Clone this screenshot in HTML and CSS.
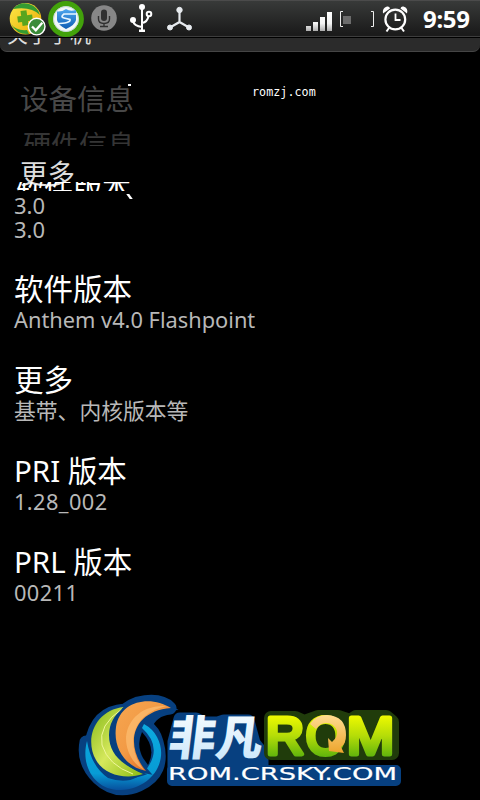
FILE: index.html
```html
<!DOCTYPE html>
<html lang="zh-CN">
<head>
  <meta charset="UTF-8">
  <title>关于手机</title>
  <link rel="stylesheet" href="styles.css">
</head>
<body>
<div class="phone">
  <header class="status-bar">
    <svg class="status-icons" width="200" height="38" viewBox="0 0 200 38">
      <defs>
        <linearGradient id="ball" x1="0" y1="0" x2="1" y2="1">
          <stop offset="0" stop-color="#ffe94a"/><stop offset="1" stop-color="#e6a800"/>
        </linearGradient>
        <linearGradient id="shield" x1="0" y1="0" x2="0" y2="1">
          <stop offset="0" stop-color="#4da6ee"/><stop offset="1" stop-color="#0e5db4"/>
        </linearGradient>
      </defs>
      <!-- safe guard -->
      <circle cx="25.500" cy="18.800" r="15.800" fill="url(#ball)"/>
      <path d="M13 9Q20 1 29 4Q38 7 40 15Q31 6 13 9Z" fill="#349b32"/>
      <path d="M11 24Q16 31 27 30L29 34Q17 35 11 24Z" fill="#349b32"/>
      <path d="M21.500 10.500h6v5h5v6h-5v4h-6v-4h-4v-6h4z" fill="#58a51e" transform="rotate(-8 25 18)"/>
      <circle cx="36.700" cy="26.600" r="8.300" fill="#3a8b39" stroke="#fff" stroke-width="1.400"/>
      <path d="M32 26.500l3.800 3.800 6.500-7.500" fill="none" stroke="#fff" stroke-width="2.300"/>
      <!-- shield -->
      <circle cx="66" cy="19" r="15.300" fill="#f3f7f6" stroke="#42a20b" stroke-width="5.200"/>
      <circle cx="66" cy="19" r="12.500" fill="none" stroke="#c3d8d4" stroke-width="1"/>
      <path d="M57 11.500Q62 12 66 9Q70 12 76 10V20Q75 25 66 29Q58 25 57 20Z" fill="url(#shield)"/>
      <path d="M77 14H64Q60 17 64 18L70 19.500Q71 23.500 56 23.500" fill="none" stroke="#e8f6ff" stroke-width="1.700"/>
      <!-- microphone -->
      <circle cx="104" cy="18" r="12.800" fill="#878787"/>
      <rect x="101" y="9.500" width="6" height="11.500" rx="3" fill="#303030"/>
      <path d="M98.500 16v3q0 4.500 5.500 4.500t5.500-4.500v-3M104 23.500v3M100 26.500h8" fill="none" stroke="#303030" stroke-width="1.400"/>
      <!-- usb -->
      <g fill="none" stroke="#fff" stroke-width="2">
        <path d="M142 7v24M133 21q1 5 9 6M148.500 16q-1 6-6.500 7"/>
        <circle cx="149" cy="14" r="2.300"/>
      </g>
      <circle cx="142" cy="7" r="3" fill="#fff"/>
      <circle cx="133" cy="20" r="3" fill="#fff"/>
      <rect x="139" y="29.500" width="6" height="2.500" fill="#fff"/>
      <!-- sync nodes -->
      <g fill="#e6eaee" stroke="#e6eaee">
        <path d="M179.500 11v11L170 27.500M179.500 22L189 27.500" fill="none" stroke-width="2.200"/>
        <circle cx="179.500" cy="10" r="2.700"/><circle cx="170" cy="27.500" r="2.500"/><circle cx="189" cy="27.500" r="2.500"/>
      </g>
    </svg>
    <svg class="status-icons" width="110" height="38" viewBox="300 0 110 38">
      <defs>
        <linearGradient id="bars" x1="0" y1="12" x2="0" y2="31" gradientUnits="userSpaceOnUse">
          <stop offset="0" stop-color="#fff"/><stop offset=".6" stop-color="#f4f4f4"/><stop offset="1" stop-color="#adadad"/>
        </linearGradient>
      </defs>
      <path d="M306 26h5v5h-5zM313 22h5v9h-5zM320 17h5v14h-5zM327 12h5v19h-5z" fill="url(#bars)"/>
      <path d="M343 11.500h-2.500v15h2.500M371 11.500h2.500v15H371" fill="none" stroke="#eee" stroke-width="1"/>
      <rect x="343" y="16" width="8" height="8" fill="#6c6c6c"/>
      <!-- alarm clock -->
      <g fill="none" stroke="#fff">
        <circle cx="395.300" cy="19.500" r="9.900" stroke-width="2.200"/>
        <path d="M395.500 13.500v6.500h5" stroke-width="1.800"/>
        <path d="M389 28l-2.500 3.500M401.500 28l2.500 3.500" stroke-width="2"/>
      </g>
      <path d="M383 13.500Q382 8 387 6.500Q389.500 6 390 8.500ZM407 13.500Q408.500 8 403.500 6.500Q401 6 400.500 8.500Z" fill="#fff"/>
    </svg>
    <span class="clock">9:59</span>
  </header>

  <div class="title-bar"><span>关于手机</span></div>

  <div class="fading">
    <div class="ghost device">设备信息</div>
    <div class="ghost hardware">硬件信息</div>
    <div class="ghost more">更多</div>
    <div class="ghost software">软件版本</div>
    <div class="value">3.0</div>
    <div class="value">3.0</div>
    <i class="speck top"></i>
    <i class="speck tail"></i>
    <span class="site">romzj.com</span>
  </div>

  <ul class="settings">
    <li><h2>软件版本</h2><p>Anthem v4.0 Flashpoint</p></li>
    <li><h2>更多</h2><p>基带、内核版本等</p></li>
    <li><h2>PRI 版本</h2><p class="digits">1.28_002</p></li>
    <li><h2>PRL 版本</h2><p class="digits">00211</p></li>
  </ul>

  <svg class="logo" width="330" height="110" viewBox="75 690 330 110">
    <defs>
      <linearGradient id="green" x1="0" y1="715" x2="0" y2="757" gradientUnits="userSpaceOnUse">
        <stop offset="0" stop-color="#f0fa00"/><stop offset=".5" stop-color="#b4dc08"/><stop offset="1" stop-color="#5fb40c"/>
      </linearGradient>
      <linearGradient id="leaf" x1="0" y1="0" x2="1" y2="1">
        <stop offset="0" stop-color="#83b817"/><stop offset=".5" stop-color="#d5e85c"/><stop offset="1" stop-color="#8bbb13"/>
      </linearGradient>
      <linearGradient id="orange" x1="0" y1="0" x2="1" y2="1">
        <stop offset="0" stop-color="#f6a650"/><stop offset=".45" stop-color="#f29a45"/><stop offset="1" stop-color="#d75313"/>
      </linearGradient>
      <linearGradient id="ring" x1="0" y1="0" x2="0" y2="1">
        <stop offset="0" stop-color="#0caadf"/><stop offset=".75" stop-color="#079bd5"/><stop offset="1" stop-color="#07509d"/>
      </linearGradient>
      <linearGradient id="ice" x1="0" y1="0" x2="0" y2="1">
        <stop offset="0" stop-color="#fff"/><stop offset="1" stop-color="#c6e5fa"/>
      </linearGradient>
      <linearGradient id="arrow" x1="0" y1="0" x2="0" y2="1">
        <stop offset="0" stop-color="#ffdc91"/><stop offset="1" stop-color="#eda52d"/>
      </linearGradient>
    </defs>
    <!-- dark outlines -->
    <g fill="#074080" stroke="#074080" stroke-width="13" stroke-linejoin="round">
      <path d="M86 742Q82 762 98 778Q116 795 139 785Q166 773 157 742Q154 731 146 726Q151 710 170 708Q160 698 138 703Q132 705 125 710Q96 712 91 744Z"/>
      <path d="M180 719h16l8 4h14l6-2h24l6 22 8 10v23H174v-34Z"/>
      <path d="M172 770h224v11H172z" stroke-width="10"/>
    </g>
    <path d="M271 718h24l9 4 14-5h20l12 4 6-4h30l6 5v31H271Z" fill="#203c0b" stroke="#203c0b" stroke-width="14" stroke-linejoin="round"/>
    <path d="M142 732Q136 745 143 758L148 765Q157 748 142 732Z" fill="#000"/>
    <!-- crescents -->
    <path d="M87 741C80 767 96 791 121 790C151 789 170 761 157 737Q153 729 144 724L142 728Q162 746 148 767Q134 787 108 778Q91 766 87 741Z" fill="url(#ring)"/>
    <path d="M124 707C95 710 84 739 96 760C104 775 126 780 143 774C123 765 109 755 109 735Q109 719 124 707Z" fill="url(#leaf)" stroke="#074080" stroke-width="3" paint-order="stroke"/>
    <path d="M122 709Q98 725 102 745Q108 765 133 774" fill="none" stroke="#eff69b" stroke-width="1"/>
    <path d="M171 708C151 695 120 700 116 727C113 749 126 767 146 771C124 745 132 711 171 708Z" fill="url(#orange)" stroke="#074080" stroke-width="5" paint-order="stroke"/>
    <path d="M167 706C137 704 122 727 127 747Q131 763 144 770C124 745 132 713 167 706Z" fill="#ffc47a" opacity=".6"/>
    <!-- wordmark -->
    <text class="brand-cn" transform="translate(167 755) skewX(-7)" textLength="94" lengthAdjust="spacingAndGlyphs" fill="url(#ice)">非凡</text>
    <g class="brand-rom" fill="url(#green)" stroke="url(#green)">
      <text x="266" y="753.500" textLength="38" lengthAdjust="spacingAndGlyphs">R</text>
      <text x="306" y="753.500" textLength="39" lengthAdjust="spacingAndGlyphs">O</text>
      <text x="347" y="753.500" textLength="47" lengthAdjust="spacingAndGlyphs">M</text>
    </g>
    <path d="M310 724Q316 715 327 715Q346 716 346 735Q346 744 341 747L344 753L329 751L328 738L332 742Q338 737 337 731Q334 723 326 723Q320 723 316 729Z" fill="url(#arrow)"/>
    <text class="brand-url" x="168" y="780" textLength="229" lengthAdjust="spacingAndGlyphs">ROM.CRSKY.COM</text>
  </svg>
</div>
</body>
</html>
```
FILE: styles.css
```css
* {
  box-sizing: border-box;
}
body {
  margin: 0;
  background: #000;
  color: #fff;
  font-family: "Noto Sans", "Noto Sans CJK SC", sans-serif;
}
.phone {
  display: flex;
  flex-direction: column;
  width: 480px;
  height: 800px;
  overflow: hidden;
}
.status-bar {
  display: flex;
  flex: none;
  align-items: center;
  height: 38px;
  background: linear-gradient(#383a39, #1b1b1b 90%);
  border-top: 1px solid #4b4b4b;
  border-bottom: 1px solid #000;
  box-shadow: inset 0 -1px #3d3d3d;
}
.status-icons {
  flex: none;
}
.status-icons + .status-icons {
  margin-left: 100px;
}
.clock {
  margin: 0 0 1px 13px;
  font-size: 24px;
  font-weight: bold;
  letter-spacing: -0.3px;
}
.title-bar {
  display: flex;
  flex: none;
  align-items: flex-end;
  height: 14px;
  padding: 0 7px 5px;
  overflow: hidden;
  background: #2b2b2b;
  border-bottom: 1px solid #454545;
  border-radius: 0 0 7px 7px;
  font-size: 21px;
  line-height: 24px;
  color: #ddd;
}
.fading {
  position: relative;
  flex: none;
  height: 221px;
  padding-top: 29px;
}
.ghost {
  overflow: hidden;
  font-size: 28.5px;
  line-height: 36px;
}
.device {
  height: 48px;
  padding-left: 20px;
  color: #484848;
}
.hardware {
  height: 17px;
  padding-left: 23px;
  font-size: 28px;
  line-height: 32px;
  color: #353535;
}
.more {
  height: 36px;
  margin-top: 10px;
  padding-left: 20px;
  font-size: 27.5px;
  color: #ddd;
}
.software {
  height: 9px;
  margin-top: -10px;
  padding-left: 15px;
  font-size: 29px;
  line-height: 14px;
}
.value {
  padding-left: 14px;
  font-size: 22px;
  line-height: 24px;
  color: #b8b8b8;
}
.software + .value {
  margin-top: 2px;
}
.speck {
  position: absolute;
  left: 128px;
  width: 3px;
  height: 2px;
  background: #fff;
}
.speck.top {
  top: 32px;
}
.speck.tail {
  top: 142px;
  height: 5px;
  transform: skewX(35deg);
}
.site {
  position: absolute;
  top: 32px;
  left: 252px;
  font: 11.7px/16px "DejaVu Sans Mono", monospace;
  letter-spacing: 0.05px;
}
.settings {
  flex: none;
  margin: 0;
  padding: 0 14px;
  list-style: none;
}
.settings li {
  height: 91px;
}
.settings h2 {
  margin: 0;
  font-size: 29.5px;
  font-weight: normal;
  line-height: 32px;
}
.settings p {
  margin: 0;
  font-size: 21.8px;
  line-height: 29px;
  color: #b8b8b8;
}
.settings .digits {
  letter-spacing: 0.4px;
}
.logo {
  flex: none;
  margin: auto 0 0 75px;
}
.brand-cn {
  font: 900 47px "Noto Sans CJK SC", sans-serif;
}
.brand-rom {
  font: 51px "Liberation Sans", sans-serif;
  stroke-width: 5px;
  stroke-linejoin: round;
}
.brand-url {
  font: 18.5px "DejaVu Sans", sans-serif;
  fill: #fff;
  stroke: #fff;
  stroke-width: 0.2px;
}
```
